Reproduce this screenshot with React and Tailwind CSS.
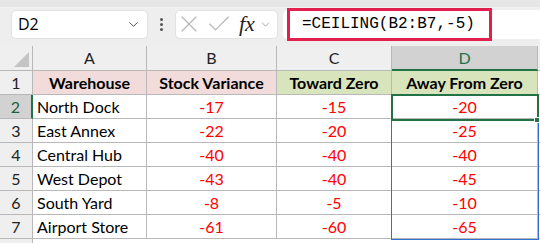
import { ChevronDown, X, Check } from 'lucide-react';

const rows = [
  ['North Dock', -17, -15, -20],
  ['East Annex', -22, -20, -25],
  ['Central Hub', -40, -40, -40],
  ['West Depot', -43, -40, -45],
  ['South Yard', -8, -5, -10],
  ['Airport Store', -61, -60, -65],
];

const cellFont = { fontFamily: 'Lato, "Open Sans", sans-serif' };

const App = () => {
  return (
    <div className="w-[540px] h-[243px] overflow-hidden bg-[#eeeeee]">
      {/* Top strip */}
      <div className="h-2 bg-[#e6e6e6] border-b border-[#f2f2f2]"></div>

      {/* Formula bar */}
      <div className="h-[32px] flex items-center pl-[11px]">
        <div className="w-[137px] h-[29px] bg-white rounded-[5px] border border-[#e2e2e2] flex items-center justify-between pl-[6px] pr-[6px]">
          <span className="text-[16px] text-black" style={{ fontFamily: '"Open Sans", sans-serif' }}>D2</span>
          <ChevronDown size={15} strokeWidth={1.5} className="text-[#444]" />
        </div>
        <div className="w-[27px] flex flex-col items-center gap-[2px]">
          <span className="w-[3px] h-[3px] bg-[#555] rounded-full"></span>
          <span className="w-[3px] h-[3px] bg-[#555] rounded-full"></span>
          <span className="w-[3px] h-[3px] bg-[#555] rounded-full"></span>
        </div>
        <div className="w-[103px] h-[29px] bg-white rounded-[5px] border border-[#e2e2e2] flex items-center">
          <X size={28} strokeWidth={1} className="text-[#b5b5b5] -ml-[1px]" />
          <Check size={28} strokeWidth={1} className="text-[#b5b5b5] ml-[2px]" />
          <span className="italic text-[22px] text-[#222] ml-[6px] leading-none" style={{ fontFamily: '"Liberation Serif", serif' }}>fx</span>
          <ChevronDown size={13} strokeWidth={1.5} className="text-[#999] ml-[4px]" />
        </div>
        <div className="ml-[5px] flex-1 h-[29px] bg-white rounded-l-[5px] flex items-center relative">
          <div className="absolute left-[4px] top-[-2px] w-[205px] h-[33px] border-[3px] border-[#e2204d]"></div>
          <span className="pl-[19px] text-[16px] text-black" style={{ fontFamily: '"Liberation Mono", monospace' }}>=CEILING(B2:B7,-5)</span>
        </div>
      </div>

      <div className="h-[6px]"></div>

      {/* Grid */}
      <div className="relative bg-white">
        <div className="grid grid-cols-[33px_114px_130px_115px_146px_1fr] text-[16px]" style={cellFont}>
          {/* Column headers */}
          <div className="h-[25px] bg-[#efefef] border-r border-b border-[#b8b8b8] relative">
            <div className="absolute right-[3px] bottom-[3px] w-0 h-0 border-l-[15px] border-l-transparent border-b-[15px] border-b-[#c4c4c4]"></div>
          </div>
          <div className="h-[25px] bg-[#efefef] border-r border-b border-[#b8b8b8] flex items-center justify-center text-[#222]">A</div>
          <div className="h-[25px] bg-[#efefef] border-r border-b border-[#b8b8b8] flex items-center justify-center text-[#222]">B</div>
          <div className="h-[25px] bg-[#efefef] border-r border-b border-[#b8b8b8] flex items-center justify-center text-[#222]">C</div>
          <div className="h-[25px] bg-[#d2d2d2] border-r border-[#b8b8b8] border-b-2 border-b-[#217346] flex items-center justify-center text-[#217346]">D</div>
          <div className="h-[25px] bg-[#efefef] border-b border-[#b8b8b8]"></div>

          {/* Row 1 headers */}
          <div className="h-[24px] bg-[#efefef] border-r border-b border-[#b8b8b8] flex items-center justify-center text-[#222]">1</div>
          <div className="h-[24px] bg-[#f2dcdb] border-r border-b border-[#b8b8b8] flex items-center justify-center font-bold text-black">Warehouse</div>
          <div className="h-[24px] bg-[#f2dcdb] border-r border-b border-[#b8b8b8] flex items-center justify-center font-bold text-black">Stock Variance</div>
          <div className="h-[24px] bg-[#d8e4bc] border-r border-b border-[#b8b8b8] flex items-center justify-center font-bold text-black">Toward Zero</div>
          <div className="h-[24px] bg-[#d8e4bc] border-r border-b border-[#b8b8b8] flex items-center justify-center font-bold text-black">Away From Zero</div>
          <div className="h-[24px] border-b border-[#b8b8b8]"></div>

          {rows.map((r, i) => (
            <div key={i} className="contents">
              <div className={i === 0
                ? 'h-[24px] bg-[#d2d2d2] border-r-2 border-r-[#217346] border-b border-b-[#b8b8b8] flex items-center justify-center text-[#1d5e3a]'
                : 'h-[24px] bg-[#efefef] border-r border-b border-[#b8b8b8] flex items-center justify-center text-[#222]'}>{i + 2}</div>
              <div className="h-[24px] border-r border-b border-[#b8b8b8] flex items-center pl-[4px] text-black">{r[0]}</div>
              <div className="h-[24px] border-r border-b border-[#b8b8b8] flex items-center justify-center text-[#ff0000]">{r[1]}</div>
              <div className="h-[24px] border-r border-b border-[#b8b8b8] flex items-center justify-center text-[#ff0000]">{r[2]}</div>
              <div className="h-[24px] border-r border-b border-[#b8b8b8] flex items-center justify-center text-[#ff0000]">{r[3]}</div>
              <div className="h-[24px] border-b border-[#b8b8b8]"></div>
            </div>
          ))}
          <div className="h-[24px] bg-[#efefef] border-r border-[#b8b8b8]"></div>
        </div>

        {/* Spill range outline */}
        <div className="absolute left-[391px] top-[73px] w-[148px] h-[121px] border border-t-0 border-[#2f6fd6] pointer-events-none"></div>
        {/* Active cell */}
        <div className="absolute left-[391px] top-[48px] w-[148px] h-[27px] border-2 border-[#217346] pointer-events-none"></div>
        <div className="absolute left-[534px] top-[71px] w-[6px] h-[6px] bg-[#217346] border border-white pointer-events-none"></div>
      </div>
    </div>
  );
};

export default App;
